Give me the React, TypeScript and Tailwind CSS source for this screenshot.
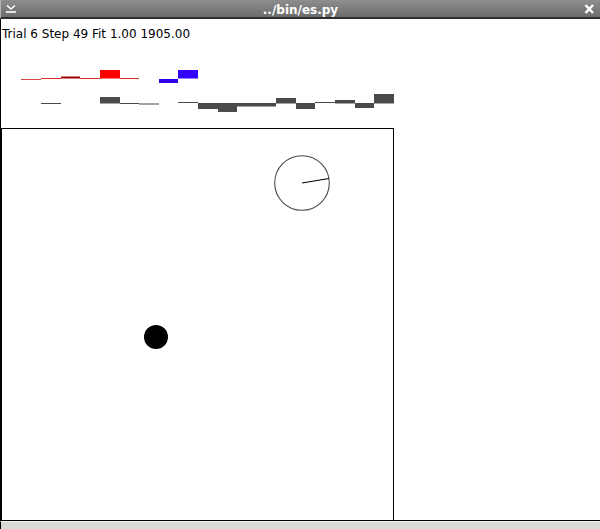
import React from 'react';

const font = { fontFamily: '"DejaVu Sans", "Liberation Sans", sans-serif' };

// value rows of the network display: [x0, x1, yTop, yBottom, colour]
const redRow: [number, number, number, number, string][] = [
  [21, 41, 79, 80, '#d04a4a'],
  [41, 61, 78, 79, '#d83030'],
  [61, 80, 76.5, 78.5, '#a00000'],
  [80, 100, 78, 79, '#d83030'],
  [100, 120, 70, 78.5, '#ff0000'],
  [120, 139, 78, 79, '#d83030'],
];

const blueRow: [number, number, number, number, string][] = [
  [159, 178, 79, 83, '#3300ee'],
  [178, 198, 70, 78.5, '#3300ff'],
];

const grayRow: [number, number, number, number][] = [
  [41, 61, 103, 104],
  [100, 120, 97, 103.5],
  [120, 139, 103, 104],
  [139, 159, 103.5, 104.5],
  [178, 198, 102, 103],
  [198, 218, 103, 109],
  [218, 237, 103, 112],
  [237, 276, 103, 106.5],
  [276, 296, 98, 103.5],
  [296, 315, 103, 109],
  [315, 335, 102, 103],
  [335, 355, 100, 103.5],
  [355, 374, 103, 108],
  [374, 394, 94, 103.5],
];

function TitleBar() {
  return (
    <div className="grid grid-cols-[20px_1fr_20px] h-[19px] bg-gradient-to-b from-[#8e8e8e] to-[#6c6c6c] border-b-2 border-[#2e2e2e] border-l border-l-[#b4b4b4]">
      <div className="flex items-start">
        <svg width="20" height="17" viewBox="0 0 20 17">
          <path d="M6 5.5 L10 9 L14 5.5" fill="none" stroke="#fff" strokeWidth="1.6" />
          <path d="M5 12 H15" stroke="#fff" strokeWidth="1.6" />
        </svg>
      </div>
      <div className="text-center text-white font-bold text-[12px] leading-[13px] pt-[4px]" style={font}>
        ../bin/es.py
      </div>
      <div className="flex items-start">
        <svg width="20" height="17" viewBox="0 0 20 17">
          <path d="M5.5 5 L13 13 M13 5 L5.5 13" stroke="#fff" strokeWidth="2.4" />
        </svg>
      </div>
    </div>
  );
}

function Chart() {
  return (
    <svg width="599" height="68" viewBox="1 60 599 68" className="block mt-[19px]">
      {redRow.map(([x0, x1, y0, y1, c], i) => (
        <rect key={'r' + i} x={x0} y={y0} width={x1 - x0} height={y1 - y0} fill={c} />
      ))}
      {blueRow.map(([x0, x1, y0, y1, c], i) => (
        <rect key={'b' + i} x={x0} y={y0} width={x1 - x0} height={y1 - y0} fill={c} />
      ))}
      {grayRow.map(([x0, x1, y0, y1], i) => (
        <rect key={'g' + i} x={x0} y={y0} width={x1 - x0} height={y1 - y0} fill="#4a4a4a" />
      ))}
    </svg>
  );
}

function Arena() {
  return (
    <div className="w-[393px] h-[392px] border-t border-r border-l border-black">
      <svg width="391" height="391" viewBox="2 129 391 391" className="block">
        <circle cx="302" cy="183" r="27.3" fill="none" stroke="#4a4a4a" strokeWidth="1.1" />
        <line x1="302" y1="183" x2="329" y2="178.5" stroke="#000" strokeWidth="1.1" />
        <circle cx="156" cy="337" r="12" fill="#000" />
      </svg>
    </div>
  );
}

export default function App() {
  return (
    <div className="w-[600px] h-[529px] flex flex-col bg-white overflow-hidden">
      <TitleBar />
      <div className="flex-1 border-l border-black bg-white">
        <div className="pl-[1px] pt-[8px] text-[12px] leading-[14px] text-black" style={font}>
          Trial 6 Step 49 Fit 1.00 1905.00
        </div>
        <Chart />
        <Arena />
      </div>
      <div className="border-t border-black">
        <div className="h-[8px] bg-[#dcdad6] border-l border-black border-t border-t-[#f2f1ef]" />
      </div>
    </div>
  );
}
